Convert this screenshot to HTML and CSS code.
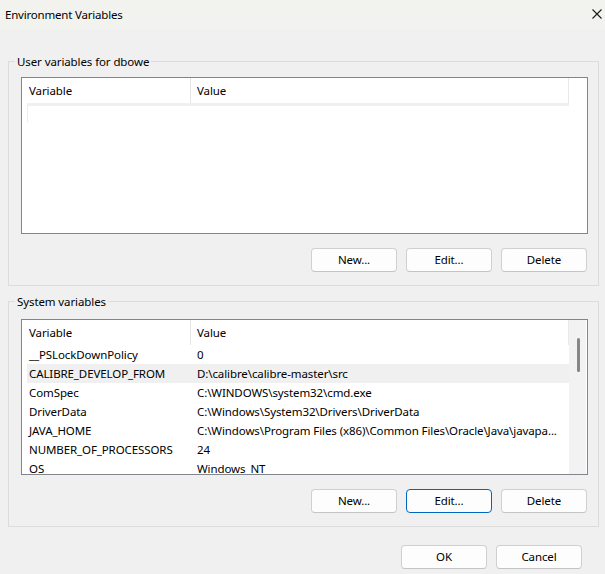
FILE: index.html
```html
<!DOCTYPE html>
<html>
<head>
<meta charset="utf-8">
<title>Environment Variables</title>
<link rel="stylesheet" href="styles.css">
</head>
<body>
<div class="window">
  <div class="titlebar">
    <span class="title">Environment Variables</span>
    <svg class="close" width="10" height="10" viewBox="0 0 10 10"><path d="M0.5 0.5 L9.5 9.5 M9.5 0.5 L0.5 9.5" stroke="#1a1a1a" stroke-width="1.1" fill="none"/></svg>
  </div>
  <div class="content">
    <fieldset class="group">
      <legend>User variables for dbowe</legend>
      <div class="list list-user">
        <div class="list-main">
          <div class="list-header">
            <div class="cell cell-var hcell">Variable</div>
            <div class="cell cell-val">Value</div>
          </div>
          <div class="ghost-row"></div>
        </div>
      </div>
      <div class="buttons">
        <button class="btn">New...</button>
        <button class="btn">Edit...</button>
        <button class="btn">Delete</button>
      </div>
    </fieldset>

    <fieldset class="group group-system">
      <legend>System variables</legend>
      <div class="list list-system">
        <div class="list-main">
          <div class="list-header">
            <div class="cell cell-var hcell">Variable</div>
            <div class="cell cell-val">Value</div>
          </div>
          <div class="row"><div class="cell cell-var">__PSLockDownPolicy</div><div class="cell cell-val">0</div></div>
          <div class="row row-hot"><div class="cell cell-var">CALIBRE_DEVELOP_FROM</div><div class="cell cell-val">D:\calibre\calibre-master\src</div></div>
          <div class="row"><div class="cell cell-var">ComSpec</div><div class="cell cell-val">C:\WINDOWS\system32\cmd.exe</div></div>
          <div class="row"><div class="cell cell-var">DriverData</div><div class="cell cell-val">C:\Windows\System32\Drivers\DriverData</div></div>
          <div class="row"><div class="cell cell-var">JAVA_HOME</div><div class="cell cell-val">C:\Windows\Program Files (x86)\Common Files\Oracle\Java\javapa...</div></div>
          <div class="row"><div class="cell cell-var">NUMBER_OF_PROCESSORS</div><div class="cell cell-val">24</div></div>
          <div class="row"><div class="cell cell-var">OS</div><div class="cell cell-val">Windows_NT</div></div>
        </div>
        <div class="scrollbar"><div class="thumb"></div></div>
      </div>
      <div class="buttons">
        <button class="btn">New...</button>
        <button class="btn btn-focus">Edit...</button>
        <button class="btn">Delete</button>
      </div>
    </fieldset>

    <div class="dialog-buttons">
      <button class="btn">OK</button>
      <button class="btn">Cancel</button>
    </div>
  </div>
</div>
</body>
</html>
```

FILE: styles.css
```css
html, body {
  margin: 0;
  padding: 0;
}
body {
  background: #f0f0f0;
  font-family: "Noto Sans", "Open Sans", sans-serif;
  font-size: 11.5px;
  letter-spacing: -0.1px;
  color: #000;
}
.window {
  width: 605px;
  height: 574px;
  display: flex;
  flex-direction: column;
  overflow: hidden;
}
.titlebar {
  height: 29px;
  flex: none;
  background: #f2f3ee;
  display: flex;
  align-items: center;
  justify-content: space-between;
  padding: 0 3px 0 5px;
  box-sizing: border-box;
}
.title {
  line-height: 16px;
  padding-top: 1px;
  letter-spacing: -0.2px;
}
.close {
  display: block;
  margin-top: -2px;
}
.content {
  flex: 1;
  display: flex;
  flex-direction: column;
  padding: 0 6px 0 8px;
}
.group {
  margin: 24px 0 0;
  padding: 0 10px 13px 12px;
  border: 1px solid #dcdcdc;
  min-width: 0;
}
.group-system {
  margin-top: 7px;
}
.group legend {
  margin-left: -6px;
  padding: 0 2px;
  line-height: 17px;
}
.list {
  margin-top: 7px;
  border: 1px solid #82868c;
  background: #fff;
  display: flex;
  overflow: hidden;
  box-sizing: border-box;
}
.list-user {
  height: 157px;
}
.list-system {
  margin-top: 9px;
  height: 156px;
}
.list-main {
  width: 542px;
  margin-left: 5px;
  flex: none;
}
.list-header {
  display: flex;
  height: 25px;
  line-height: 25px;
  border-right: 1px solid #e8e8e8;
  box-sizing: border-box;
}
.cell {
  white-space: nowrap;
  overflow: hidden;
}
.cell-var {
  width: 164px;
  flex: none;
  padding-left: 2px;
  box-sizing: border-box;
}
.hcell {
  border-right: 1px solid #e5e5e5;
}
.cell-val {
  flex: 1;
  padding-left: 6px;
}
.ghost-row {
  height: 16px;
  border-top: 3px solid #f0f0f0;
  border-left: 1px solid #ececec;
}
.row {
  display: flex;
  height: 19px;
  line-height: 19px;
}
.row-hot {
  background: #f0f0f0;
}
.scrollbar {
  width: 17px;
  flex: none;
  background: #f2f2f2;
  padding-top: 18px;
  box-sizing: border-box;
}
.thumb {
  width: 3px;
  height: 34px;
  margin-left: 8px;
  background: #868686;
  border-radius: 1.5px;
}
.buttons {
  display: flex;
  justify-content: flex-end;
  gap: 9px;
  margin-top: 14px;
  padding-right: 1px;
}
.btn {
  width: 86px;
  height: 24px;
  padding: 0;
  background: #fdfdfd;
  border: 1px solid #d0d0d0;
  border-bottom-color: #c4c4c4;
  border-radius: 4px;
  font-family: inherit;
  font-size: 11.5px;
  letter-spacing: -0.1px;
  color: #000;
  line-height: 20px;
}
.btn-focus {
  border-color: #0067c0;
}
.dialog-buttons {
  display: flex;
  justify-content: flex-end;
  gap: 9px;
  margin-top: 18px;
  padding-right: 17px;
}
```
